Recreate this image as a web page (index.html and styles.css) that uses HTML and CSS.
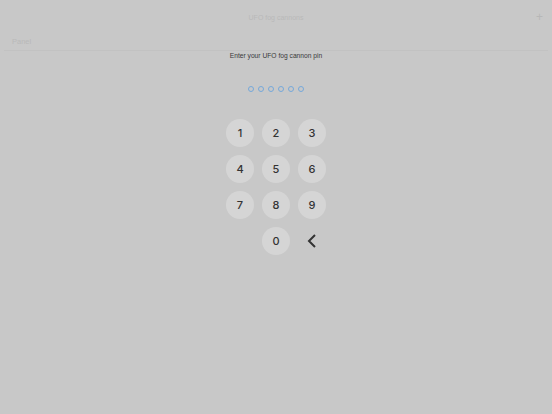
FILE: index.html
```html
<!DOCTYPE html>
<html lang="en">
<head>
  <meta charset="UTF-8" />
  <meta name="viewport" content="width=device-width, initial-scale=1.0"/>
  <title>UFO fog cannons</title>
  <link rel="stylesheet" href="styles.css">
</head>
<body>

  <div class="topbar">
    <span class="title">UFO fog cannons</span>
    <span class="add">+</span>
  </div>

  <div class="panel">Panel</div>

  <div class="pin-screen">
    <p class="prompt">Enter your UFO fog cannon pin</p>

    <div class="dots">
      <span class="dot"></span>
      <span class="dot"></span>
      <span class="dot"></span>
      <span class="dot"></span>
      <span class="dot"></span>
      <span class="dot"></span>
    </div>

    <div class="keypad">
      <button class="key">1</button>
      <button class="key">2</button>
      <button class="key">3</button>
      <button class="key">4</button>
      <button class="key">5</button>
      <button class="key">6</button>
      <button class="key">7</button>
      <button class="key">8</button>
      <button class="key">9</button>
      <span></span>
      <button class="key">0</button>
      <button class="key back">
        <svg width="12" height="16" viewBox="0 0 12 16">
          <path d="M9 2 L3 8 L9 14" fill="none" stroke="#333" stroke-width="2"/>
        </svg>
      </button>
    </div>
  </div>

</body>
</html>
```

FILE: styles.css
```css
body {
  margin: 0;
  font-family: 'Liberation Sans', sans-serif;
  background: #c8c8c8;
  color: #333;
}
.topbar {
  height: 34px;
  display: flex;
  align-items: center;
  justify-content: center;
  position: relative;
}
.title {
  font-size: 7px;
  color: #b9b9b9;
}
.add {
  position: absolute;
  right: 9px;
  top: 10px;
  font-size: 12px;
  color: #b7b7b7;
}
.panel {
  margin: 0 4px;
  padding: 2px 8px 0;
  height: 14px;
  font-size: 7.5px;
  line-height: 11px;
  color: #b9b9b9;
  border-bottom: 1px solid #c2c2c2;
}
.pin-screen {
  display: flex;
  flex-direction: column;
  align-items: center;
}
.prompt {
  margin: 0;
  font-size: 6.7px;
  line-height: 10px;
  color: #3a3a3a;
}
.dots {
  margin-top: 25px;
  display: flex;
  gap: 4px;
}
.dot {
  width: 4px;
  height: 4px;
  border: 1px solid #76a8da;
  border-radius: 50%;
}
.keypad {
  margin-top: 27px;
  display: grid;
  grid-template-columns: repeat(3, 28px);
  grid-auto-rows: 28px;
  gap: 8px;
}
.key {
  width: 28px;
  height: 28px;
  padding: 0;
  border: none;
  border-radius: 50%;
  background: #d5d5d5;
  font-family: 'Inter', 'Liberation Sans', sans-serif;
  font-size: 11px;
  font-weight: 500;
  color: #333;
  display: flex;
  align-items: center;
  justify-content: center;
}
.key.back {
  background: none;
}
```
